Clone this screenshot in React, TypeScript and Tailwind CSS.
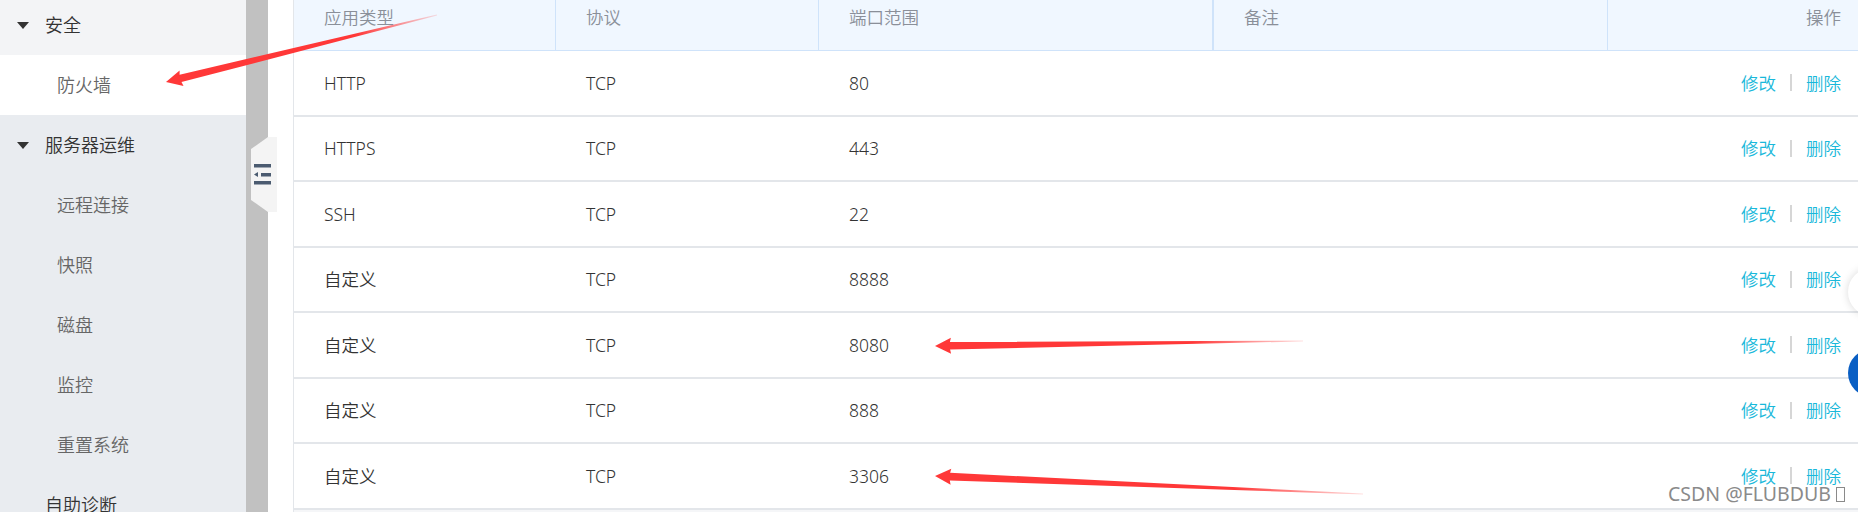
import React from 'react'

const rows = [
  { type: 'HTTP', proto: 'TCP', port: '80' },
  { type: 'HTTPS', proto: 'TCP', port: '443' },
  { type: 'SSH', proto: 'TCP', port: '22' },
  { type: '自定义', proto: 'TCP', port: '8888' },
  { type: '自定义', proto: 'TCP', port: '8080' },
  { type: '自定义', proto: 'TCP', port: '888' },
  { type: '自定义', proto: 'TCP', port: '3306' },
]

const subItems = ['远程连接', '快照', '磁盘', '监控', '重置系统']

function Caret() {
  return (
    <svg width="12" height="7" viewBox="0 0 12 7" className="mr-[16px] shrink-0">
      <polygon points="0,0 12,0 6,7" fill="#333" />
    </svg>
  )
}

// red annotation arrow, tip -> tail, shaft tapers and fades toward the tail
function Arrow({ tip, tail, id }: { tip: [number, number]; tail: [number, number]; id: string }) {
  const [x1, y1] = tip
  const [x2, y2] = tail
  const len = Math.hypot(x2 - x1, y2 - y1)
  const ux = (x2 - x1) / len
  const uy = (y2 - y1) / len
  const nx = -uy
  const ny = ux
  const hl = 16
  const bx = x1 + ux * hl
  const by = y1 + uy * hl
  const p = (x: number, y: number) => `${x.toFixed(1)},${y.toFixed(1)}`
  const pts = [
    p(x1, y1),
    p(bx + nx * 8, by + ny * 8),
    p(bx - ux * 1 + nx * 3.8, by - uy * 1 + ny * 3.8),
    p(x2 + nx * 0.4, y2 + ny * 0.4),
    p(x2 - nx * 0.4, y2 - ny * 0.4),
    p(bx - ux * 1 - nx * 3.8, by - uy * 1 - ny * 3.8),
    p(bx - nx * 8, by - ny * 8),
  ].join(' ')
  return (
    <g>
      <defs>
        <linearGradient id={id} gradientUnits="userSpaceOnUse" x1={x1} y1={y1} x2={x2} y2={y2}>
          <stop offset="0" stopColor="#ff3838" stopOpacity="1" />
          <stop offset="0.7" stopColor="#ff3838" stopOpacity="1" />
          <stop offset="1" stopColor="#ff3838" stopOpacity="0.15" />
        </linearGradient>
      </defs>
      <polygon points={pts} fill={`url(#${id})`} />
    </g>
  )
}

export default function App() {
  return (
    <main
      className="relative flex h-[512px] w-[1858px] overflow-hidden bg-white font-[350]"
      style={{ fontFamily: '"Noto Sans", "Noto Sans CJK SC", sans-serif' }}
    >
      {/* SIDEBAR */}
      <aside className="flex w-[246px] shrink-0 flex-col bg-[#e9ecf0] text-[18px]">
        <div className="-mt-[5px] flex h-[60px] shrink-0 items-center bg-[#f3f4f6] pl-[17px] text-[#333]">
          <Caret />
          <span>安全</span>
        </div>
        <div className="flex h-[60px] shrink-0 items-center bg-white pl-[57px] text-[#666]">防火墙</div>
        <div className="flex h-[60px] shrink-0 items-center pl-[17px] text-[#333]">
          <Caret />
          <span>服务器运维</span>
        </div>
        {subItems.map((s) => (
          <div key={s} className="flex h-[60px] shrink-0 items-center pl-[57px] text-[#666]">
            {s}
          </div>
        ))}
        <div className="flex h-[60px] shrink-0 items-center pl-[45px] text-[#333]">自助诊断</div>
      </aside>

      {/* collapse bar */}
      <div className="relative w-[22px] shrink-0 bg-[#c1c1c1]">
        <svg width="26" height="76" viewBox="0 0 26 76" className="absolute left-[5px] top-[137px]">
          <polygon points="17,0 0,12 0,63 17,75 26,75 26,0" fill="#f4f4f4" />
          <rect x="3" y="27" width="17" height="3.5" fill="#4b5b70" />
          <polygon points="3,37.5 7,35 7,40" fill="#4b5b70" />
          <rect x="10" y="36" width="10" height="3.5" fill="#4b5b70" />
          <rect x="3" y="44" width="17" height="3.5" fill="#4b5b70" />
        </svg>
      </div>
      <div className="w-[25px] shrink-0 bg-white" />

      {/* TABLE */}
      <section className="flex flex-1 flex-col border-l border-[#e3e6ea] text-[17.5px]">
        <div className="grid h-[51px] shrink-0 grid-cols-[262px_263px_395px_394px_1fr] border-b border-[#cfe3fa] bg-[#f0f7ff] text-[#8a8f99]">
          <div className="border-r border-[#cfe3fa] pl-[30px] pt-[4px]">应用类型</div>
          <div className="border-r border-[#cfe3fa] pl-[30px] pt-[4px]">协议</div>
          <div className="border-r-2 border-[#cfe3fa] pl-[30px] pt-[4px]">端口范围</div>
          <div className="border-r border-[#cfe3fa] pl-[30px] pt-[4px]">备注</div>
          <div className="pr-[17px] pt-[4px] text-right">操作</div>
        </div>
        {rows.map((r, i) => (
          <div
            key={i}
            className="grid h-[65.5px] shrink-0 grid-cols-[262px_263px_395px_394px_1fr] items-center border-b-2 border-[#e3e6ea] text-[#333]"
          >
            <div className="pl-[30px]">{r.type}</div>
            <div className="pl-[30px]">{r.proto}</div>
            <div className="pl-[30px]">{r.port}</div>
            <div className="pl-[30px]" />
            <div className="flex items-center justify-end pr-[17px] text-[#19b8da]">
              <span>修改</span>
              <span className="mx-[14px] h-[17px] w-[2px] bg-[#d6d6d6]" />
              <span>删除</span>
            </div>
          </div>
        ))}
        <div className="flex-1 bg-[#f5f6f8]" />
      </section>

      {/* floating round buttons at the right edge */}
      <div className="absolute left-[1848px] top-[268px] h-[48px] w-[48px] rounded-full bg-white shadow-[0_0_8px_rgba(0,0,0,0.15)]" />
      <div className="absolute left-[1848px] top-[349px] h-[48px] w-[48px] rounded-full bg-[#0a5fc4]" />

      {/* annotations */}
      <svg className="pointer-events-none absolute left-0 top-0" width="1858" height="512">
        <Arrow id="a1" tip={[166, 82]} tail={[437, 15]} />
        <Arrow id="a2" tip={[935, 346]} tail={[1303, 341]} />
        <Arrow id="a3" tip={[935, 476]} tail={[1363, 494]} />
      </svg>

      {/* watermark */}
      <div
        className="absolute left-[1668px] top-[482px] flex items-center text-[19.5px] font-normal leading-[24px] text-[#8a8a8a]"
        style={{ textShadow: '0 0 2px #fff, 0 0 2px #fff' }}
      >
        <span>CSDN @FLUBDUB</span>
        <span className="ml-[5px] h-[15px] w-[9px] border border-[#8a8a8a]" />
      </div>
    </main>
  )
}
